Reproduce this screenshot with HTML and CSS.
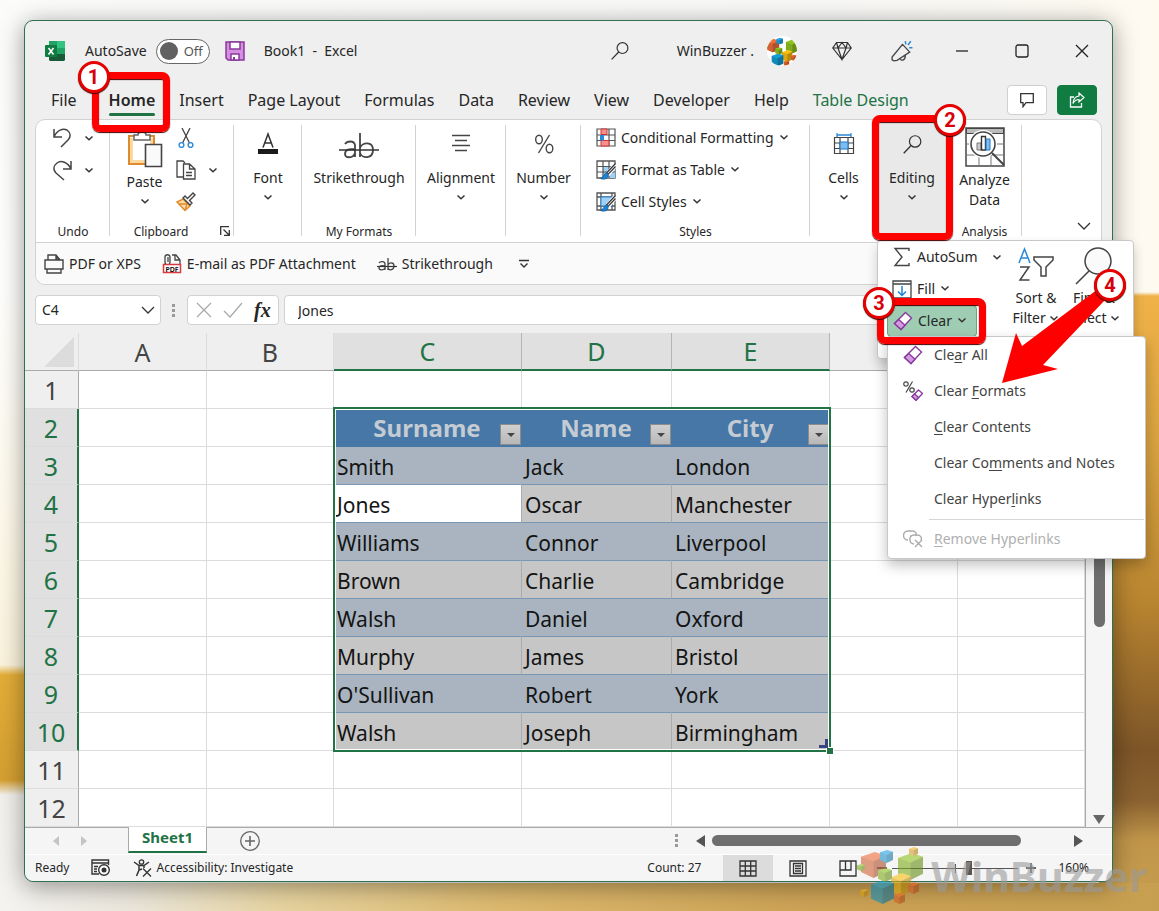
FILE: index.html
```html
<!DOCTYPE html>
<html lang="en">
<head>
    <meta charset="UTF-8">
    <meta name="viewport" content="width=device-width, initial-scale=1.0">
    <title>Book1 - Excel</title>
    <link rel="stylesheet" href="styles.css">
</head>
<body>
    <svg class="defs" width="0" height="0" aria-hidden="true">
        <symbol id="chev" viewBox="0 0 10 10"><path d="M1.500 3.500 5 6.700 8.500 3.500" fill="none" stroke="#333" stroke-width="1.500"/></symbol>
        <symbol id="chev-lg" viewBox="0 0 14 10"><path d="M1 2l6 6 6-6" fill="none" stroke="#333" stroke-width="1.300"/></symbol>
        <symbol id="lens" viewBox="0 0 24 24"><circle cx="15" cy="8.500" r="6.500" fill="none" stroke="#333" stroke-width="1.400"/><path d="M10.400 13.200 2 22" stroke="#333" stroke-width="1.500"/></symbol>
        <symbol id="cube" viewBox="0 0 20 22" preserveAspectRatio="none">
            <path d="M0 4 11 0l9 3v14l-10 5L0 17z" fill="currentColor"/>
            <path d="M0 4l10 4v14L0 17z" fill="#000" fill-opacity=".12"/>
            <path d="M10 8l10-5v14l-10 5z" fill="#000" fill-opacity=".28"/>
        </symbol>
        <symbol id="cubes" viewBox="0 0 68 58">
            <use href="#cube" x="4" y="5" width="25" height="26" color="#f0703c"/>
            <use href="#cube" x="23" y="3" width="13" height="13" color="#22a7e8"/>
            <use href="#cube" x="41" y="6" width="25" height="27" color="#8fc420"/>
            <use href="#cube" x="52" y="0" width="9" height="9" color="#f7b82a"/>
            <use href="#cube" x="0" y="17" width="8" height="7" color="#8fc420"/>
            <use href="#cube" x="34" y="26" width="20" height="23" color="#fbc011"/>
            <use href="#cube" x="14" y="33" width="23" height="24" color="#149fd6"/>
            <use href="#cube" x="21" y="21" width="14" height="14" color="#8fc420"/>
            <use href="#cube" x="3" y="42" width="8" height="8" color="#f3b318"/>
            <use href="#cube" x="51" y="35" width="11" height="12" color="#ef6a2a"/>
            <use href="#cube" x="37" y="46" width="11" height="11" color="#ef6a2a"/>
        </symbol>
        <symbol id="eraser" viewBox="0 0 20 20">
            <path d="M12.500 1.500 18.500 7 8 18.500 1.500 12.500z" fill="#fff" stroke="#8a3a9c" stroke-width="1.400"/>
            <path d="M5.800 8.500 12 14.200 8 18.500 1.500 12.500z" fill="#d59be0" stroke="#8a3a9c" stroke-width="1.400"/>
        </symbol>
        <symbol id="brush" viewBox="0 0 20 20">
            <path d="M19.500 4.500 11.500 14.500" stroke="#fff" stroke-width="5"/>
            <path d="M19.500 3.500 10.500 13l1.500 1.500 7.500-8" fill="#fff" stroke="#333" stroke-width="1.200"/>
            <path d="M10.500 13c-3 .500-2 4-6 5.500 4 1.500 8 0 7.500-4z" fill="#1f84d6" stroke="#1467a8"/>
        </symbol>
        <symbol id="strike" viewBox="0 0 40 28">
            <path d="M6 12c2-3 9-4 10 1v12M16 17c-5 0-10 0-10 5 0 4 8 5 10-1M21 1v24M21 16c2-6 13-7 13 2s-11 9-13 3" fill="none" stroke="#444" stroke-width="1.800"/>
            <path d="M0 18h40" stroke="#333" stroke-width="1.500"/>
        </symbol>
    </svg>

    <div class="desktop">
    <div class="window">

        <header class="titlebar">
            <svg class="app-icon" width="20" height="20" viewBox="0 0 20 20">
                <path d="M5 0h14l1 1v18l-1 1H5l-1-1V1z" fill="#185c37"/>
                <path d="M4 0h8v7H4z" fill="#21a366"/><path d="M12 0h8v7h-8z" fill="#33c481"/>
                <path d="M4 7h8v6H4z" fill="#107c41"/><path d="M12 7h8v6h-8z" fill="#21a366"/>
                <rect y="4" width="12" height="12" rx="1" fill="#107c41"/>
                <path d="M3.500 7 8.500 13.500M8.500 7l-5 6.500" stroke="#fff" stroke-width="1.600"/>
            </svg>
            <label class="autosave">AutoSave
                <span class="switch"><input type="checkbox"><span class="knob"></span>Off</span>
            </label>
            <button class="icon-btn save" aria-label="Save">
                <svg width="20" height="20" viewBox="0 0 20 20"><path d="M1 1h18v18H3l-2-2z" fill="#d48fe0" stroke="#8a3a9c" stroke-width="1.500"/><path d="M5 1h10v7H5zM6 19v-6h8v6z" fill="#fff" stroke="#8a3a9c" stroke-width="1.500"/><path d="M8 16h2v3H8z" fill="#8a3a9c"/></svg>
            </button>
            <span class="doc-title">Book1 &nbsp;- &nbsp;Excel</span>
            <button class="icon-btn search" aria-label="Search"><svg width="20" height="20"><use href="#lens"/></svg></button>
            <span class="user">WinBuzzer .</span>
            <span class="avatar"><svg width="36" height="31"><use href="#cubes"/></svg></span>
            <button class="cap-btn" aria-label="Premium"><svg width="20" height="20" viewBox="0 0 20 20"><path d="M4.500 1.500h11L19.200 7 10 18.500.8 7zM.8 7h18.400M10 18.500 6 7l4-5.500L14 7zM4.500 1.500 6 7M15.500 1.500 14 7" fill="none" stroke="#333" stroke-width="1.200"/></svg></button>
            <button class="cap-btn" aria-label="What's new"><svg width="22" height="22" viewBox="0 0 20 20"><path d="M10.500 4 1 15.500v2.500l1.500 1 3-.5 11.500-7.500zM8 16.500c1 3 5 2.500 5-2.500" fill="none" stroke="#444" stroke-width="1.200"/><path d="M13 1l.5 3M18 1l-2.500 3.500M16.500 7h3" stroke="#2b88d8" stroke-width="1.400"/></svg></button>
            <button class="cap-btn" aria-label="Minimize"><svg width="14" height="14"><path d="M1 7h12" stroke="#222" stroke-width="1.300"/></svg></button>
            <button class="cap-btn" aria-label="Maximize"><svg width="14" height="14"><rect x="1" y="1" width="12" height="12" rx="2" fill="none" stroke="#222" stroke-width="1.300"/></svg></button>
            <button class="cap-btn" aria-label="Close"><svg width="14" height="14"><path d="M1 1l12 12M13 1 1 13" stroke="#222" stroke-width="1.300"/></svg></button>
        </header>

        <nav class="tabs">
            <a class="tab tab-file" href="#">File</a>
            <a class="tab active" href="#">Home<span class="ring ring-home"><span class="step">1</span></span></a>
            <a class="tab" href="#">Insert</a>
            <a class="tab" href="#">Page Layout</a>
            <a class="tab" href="#">Formulas</a>
            <a class="tab" href="#">Data</a>
            <a class="tab" href="#">Review</a>
            <a class="tab" href="#">View</a>
            <a class="tab" href="#">Developer</a>
            <a class="tab" href="#">Help</a>
            <a class="tab context" href="#">Table Design</a>
            <button class="tab-btn comment" aria-label="Comments"><svg width="14" height="15" viewBox="0 0 14 15"><path d="M.700.700h12.600v9H6l-3 4v-4H.700z" fill="none" stroke="#333" stroke-width="1.300"/></svg></button>
            <button class="tab-btn share" aria-label="Share"><svg width="16" height="16" viewBox="0 0 16 16"><path d="M5 5H1.500v10h11v-4" fill="none" stroke="#fff" stroke-width="1.300"/><path d="M10 1l5 4.500L10 10V7.500c-3 0-4.500 1-6 4 .2-4 2-7 6-7.500z" fill="none" stroke="#fff" stroke-width="1.200"/></svg></button>
        </nav>

        <section class="ribbon">
            <div class="groups">
                <div class="group">
                    <div class="undo-grid">
                        <button class="icon-btn" aria-label="Undo"><svg width="22" height="22" viewBox="0 0 22 22"><path d="M2 2v8h8M2 10c3-7 9-9 13-7 4 3 4 7 1 10l-7 7" fill="none" stroke="#444" stroke-width="1.500"/></svg></button>
                        <svg width="10" height="10"><use href="#chev"/></svg>
                        <button class="icon-btn" aria-label="Redo"><svg width="22" height="22" viewBox="0 0 22 22"><path d="M19 2v8h-8M19 10C16 3 9 1 5 4 1 7 1 11 4 14l8 7" fill="none" stroke="#444" stroke-width="1.500"/></svg></button>
                        <svg width="10" height="10"><use href="#chev"/></svg>
                    </div>
                    <span class="group-label">Undo</span>
                </div>

                <div class="group">
                    <div class="clip-row">
                        <button class="big-btn tall">
                            <svg width="36" height="38" viewBox="0 0 36 38">
                                <path d="M2 6h25v28H2z" fill="#fff" stroke="#e08a2e" stroke-width="2"/>
                                <path d="M4.500 8v23.500H18M24.500 8v6" fill="none" stroke="#fbd9a0" stroke-width="3"/>
                                <path d="M7 10V5h4c0-4 8-4 8 0h4v5z" fill="#fff" stroke="#666" stroke-width="1.500"/>
                                <path d="M18.500 14.500h16v22h-16z" fill="#fafafa" stroke="#444" stroke-width="1.600"/>
                            </svg>
                            <span>Paste</span>
                            <svg width="10" height="10"><use href="#chev"/></svg>
                        </button>
                        <div class="clip-tools">
                            <button class="icon-btn wide" aria-label="Cut"><svg width="20" height="20" viewBox="0 0 20 20"><path d="M6 0l7.500 15M14 0 6.500 15" stroke="#444" stroke-width="1.300"/><circle cx="5.500" cy="17" r="2.400" fill="#fff" stroke="#2b88d8" stroke-width="1.400"/><circle cx="14.500" cy="17" r="2.400" fill="#fff" stroke="#2b88d8" stroke-width="1.400"/></svg></button>
                            <button class="icon-btn" aria-label="Copy"><svg width="20" height="20" viewBox="0 0 20 20"><path d="M7 17H1V1h6l2 2" fill="none" stroke="#444" stroke-width="1.300"/><path d="M7.500 4h6l5.500 5v10H7.500zM13.500 4v5H19M10 12.500h6M10 15.500h6" fill="#fff" stroke="#444" stroke-width="1.300"/></svg></button>
                            <svg width="10" height="10"><use href="#chev"/></svg>
                            <button class="icon-btn wide" aria-label="Format Painter"><svg width="20" height="20" viewBox="0 0 20 20"><path d="M1 10l6-3 7 7-5 4.500z" fill="#fbd9a0" stroke="#e08a2e" stroke-width="1.400"/><path d="M3 12l8 0-2 6" fill="none" stroke="#e08a2e" stroke-width="1.400"/><path d="M7 6l2-2 2.500 2.500L17 1l2 2-5.500 5.500L16 11l-2 2z" fill="#fff" stroke="#444" stroke-width="1.400"/></svg></button>
                        </div>
                    </div>
                    <span class="group-label clip-label">Clipboard</span>
                    <button class="launcher" aria-label="Clipboard options"><svg width="10" height="10"><path d="M9 .700H.700V9M3.500 3.500l5 5M9.300 4v5.300H4" fill="none" stroke="#333" stroke-width="1.300"/></svg></button>
                </div>

                <div class="group">
                    <button class="big-btn">
                        <svg width="24" height="24" viewBox="0 0 24 24"><path d="M7 15.500 12 2l5 13.500M8.800 11h6.400" fill="none" stroke="#333" stroke-width="1.500"/><path d="M2 17h20v5H2z" fill="#1a1a1a"/></svg>
                        <span>Font</span>
                        <svg width="10" height="10"><use href="#chev"/></svg>
                    </button>
                </div>

                <div class="group">
                    <button class="big-btn">
                        <svg class="mid" width="40" height="28"><use href="#strike"/></svg>
                        <span>Strikethrough</span>
                    </button>
                    <span class="group-label">My Formats</span>
                </div>

                <div class="group">
                    <button class="big-btn">
                        <svg width="24" height="24" viewBox="0 0 24 24"><path d="M3 3.500h18M6 8.500h12M3 13.500h18M6 18.500h12" stroke="#444" stroke-width="1.300"/></svg>
                        <span>Alignment</span>
                        <svg width="10" height="10"><use href="#chev"/></svg>
                    </button>
                </div>

                <div class="group">
                    <button class="big-btn">
                        <svg width="24" height="24" viewBox="0 0 24 24"><path d="M17.500 3 6.500 21" stroke="#444" stroke-width="1.400"/><ellipse cx="7" cy="7.500" rx="3.300" ry="4.200" fill="none" stroke="#444" stroke-width="1.400"/><ellipse cx="17.500" cy="16.500" rx="3.300" ry="4.200" fill="none" stroke="#444" stroke-width="1.400"/></svg>
                        <span>Number</span>
                        <svg width="10" height="10"><use href="#chev"/></svg>
                    </button>
                </div>

                <div class="group">
                    <div class="style-list">
                        <button class="row-btn">
                            <svg width="20" height="20" viewBox="0 0 20 20"><path d="M1 1h18v17H1zM1 7h18M1 12.500h18M7 1v17M13 1v17" fill="#fff" stroke="#555" stroke-width="1.200"/><path d="M5 1h6v5.500H5zM5 12.500h8V18H5z" fill="#f7918c" stroke="#d13438"/><path d="M4 7h4v5.500H4z" fill="#2b88d8"/></svg>
                            Conditional Formatting <svg width="10" height="10"><use href="#chev"/></svg>
                        </button>
                        <button class="row-btn">
                            <svg width="20" height="20" viewBox="0 0 20 20"><path d="M1 1h18v17H1z" fill="#fff" stroke="#555" stroke-width="1.300"/><path d="M7 7h12v11H7z" fill="#9fd0f5"/><path d="M1 6.500h18M1 12h18M7 1v17M13 1v17" stroke="#555" stroke-width="1.200"/><use href="#brush" width="20" height="20"/></svg>
                            Format as Table <svg width="10" height="10"><use href="#chev"/></svg>
                        </button>
                        <button class="row-btn">
                            <svg width="20" height="20" viewBox="0 0 20 20"><path d="M1 1h18v17H1zM1 5h18M5 1v17M16 1v17M1 14h18" fill="#fff" stroke="#555" stroke-width="1.300"/><path d="M5 5h11v9H5z" fill="#9fd0f5" stroke="#2b88d8"/><use href="#brush" width="20" height="20"/></svg>
                            Cell Styles <svg width="10" height="10"><use href="#chev"/></svg>
                        </button>
                    </div>
                    <span class="group-label">Styles</span>
                </div>

                <div class="group no-line">
                    <button class="big-btn">
                        <svg width="24" height="24" viewBox="0 0 24 24"><path d="M2.500 5.500h19v16h-19zM2.500 11h19M2.500 16.500h19M8 5.500v16M16 5.500v16" fill="#fff" stroke="#444" stroke-width="1.200"/><path d="M8 10h8v7H8z" fill="#7fbcf0" stroke="#1f78c8"/><path d="M5 3h14M5 1v4M19 1v4" stroke="#2b88d8" stroke-width="1.300"/></svg>
                        <span>Cells</span>
                        <svg width="10" height="10"><use href="#chev"/></svg>
                    </button>
                </div>

                <div class="group no-line editing">
                    <button class="big-btn">
                        <svg width="24" height="24" viewBox="0 0 24 24"><use href="#lens" x="2" y="2" width="21" height="21"/></svg>
                        <span>Editing</span>
                        <svg width="10" height="10"><use href="#chev"/></svg>
                    </button>

                    <div class="popup">
                        <div class="popup-left">
                            <button class="row-btn"><svg width="20" height="20" viewBox="0 0 20 20"><path d="M17 4V1.500H3l7 8.500-7 8.500h14V16" fill="none" stroke="#444" stroke-width="1.400"/></svg>AutoSum <svg class="far" width="10" height="10"><use href="#chev"/></svg></button>
                            <button class="row-btn"><svg width="20" height="20" viewBox="0 0 20 20"><path d="M1 2h18v17H1zM1 5h18" fill="#fff" stroke="#444" stroke-width="1.300"/><path d="M10 7v9M6 12.500l4 4 4-4" fill="none" stroke="#1f84d6" stroke-width="1.500"/></svg>Fill <svg width="10" height="10"><use href="#chev"/></svg></button>
                            <button class="row-btn clear"><svg width="20" height="20"><use href="#eraser"/></svg>Clear <svg width="10" height="10"><use href="#chev"/></svg></button>
                        </div>
                        <button class="popup-btn">
                            <svg width="40" height="40" viewBox="0 0 40 40"><path d="M3 16 8.500 2 14 16M5 11h7" fill="none" stroke="#2b88d8" stroke-width="1.500"/><path d="M4 20h9L4 33h9.500" fill="none" stroke="#444" stroke-width="1.500"/><path d="M18 10h19v3l-7 7v9h-5v-9l-7-7z" fill="none" stroke="#444" stroke-width="1.500"/></svg>
                            Sort &amp;<br>Filter <svg width="10" height="10"><use href="#chev"/></svg>
                        </button>
                        <button class="popup-btn">
                            <svg width="40" height="40" viewBox="0 0 40 40"><circle cx="24" cy="14" r="13" fill="#fafafa" stroke="#444" stroke-width="1.500"/><path d="M15 24 2 37" stroke="#444" stroke-width="1.600"/></svg>
                            Find &amp;<br>Select <svg width="10" height="10"><use href="#chev"/></svg>
                        </button>

                        <div class="menu">
                            <button class="menu-item"><svg width="20" height="20"><use href="#eraser"/></svg><span>Cle<u>a</u>r All</span></button>
                            <button class="menu-item"><svg width="20" height="20" viewBox="0 0 20 20"><circle cx="3" cy="3" r="2.200" fill="none" stroke="#444" stroke-width="1.200"/><circle cx="9" cy="9" r="2.200" fill="none" stroke="#444" stroke-width="1.200"/><path d="M9.500.500 3 11.500" stroke="#444" stroke-width="1.200"/><path d="M15.500 9 19.500 12.500 13 19.300 9 15.500z" fill="#fff" stroke="#8a3a9c" stroke-width="1.300"/><path d="M11.500 12.800 15.500 16.500 13 19.300 9 15.500z" fill="#d59be0" stroke="#8a3a9c" stroke-width="1.300"/></svg><span>Clear <u>F</u>ormats</span></button>
                            <button class="menu-item"><i></i><span><u>C</u>lear Contents</span></button>
                            <button class="menu-item"><i></i><span>Clear Co<u>m</u>ments and Notes</span></button>
                            <button class="menu-item"><i></i><span>Clear Hyper<u>l</u>inks</span></button>
                            <hr>
                            <button class="menu-item" disabled><svg width="20" height="20" viewBox="0 0 20 20"><path d="M5 11C-1 11-1 2 5 2h4c4 0 5 3 4 5M11 15c-5 0-6-9 0-9h3c4 0 5 3 4 5M7 7h2" fill="none" stroke="#aaa" stroke-width="1.400"/><path d="M12 11l7 7M19 11l-7 7" stroke="#aaa" stroke-width="1.400"/></svg><span><u>R</u>emove Hyperlinks</span></button>
                        </div>

                        <span class="ring ring-clear"><span class="step">3</span></span>
                        <svg class="arrow" width="120" height="100" viewBox="0 0 120 100"><path d="M5 98 19 48l6 13L101 4l7 11-62 65 15 4z" fill="#f00"/></svg>
                        <span class="step step-four">4</span>
                    </div>
                    <span class="ring ring-editing"><span class="step">2</span></span>
                </div>

                <div class="group">
                    <button class="big-btn analyze">
                        <svg width="40" height="40" viewBox="0 0 40 40"><path d="M1 1h38v38H1z" fill="#fff" stroke="#444" stroke-width="1.500"/><path d="M1.500 1.500h37v5h-37z" fill="#bbb" stroke="#444"/><path d="M1 17h38M1 28h38M14 28v11M26 28v11" stroke="#777"/><circle cx="18" cy="17" r="14" fill="#fff"/><circle cx="18" cy="17" r="12" fill="#fff" stroke="#444" stroke-width="1.600"/><path d="M12 16h4v7h-4z" fill="#ccc" stroke="#777"/><path d="M16.500 9.500h4V23h-4z" fill="#fff" stroke="#333" stroke-width="1.400"/><path d="M21 12h4v11h-4z" fill="#7fbcf0" stroke="#1f78c8"/><path d="M27 26l12 12" stroke="#444" stroke-width="2"/></svg>
                        <span>Analyze<br>Data</span>
                    </button>
                    <span class="group-label">Analysis</span>
                </div>

                <div class="group no-line collapse">
                    <button class="icon-btn" aria-label="Collapse ribbon"><svg width="14" height="10"><use href="#chev-lg"/></svg></button>
                </div>
            </div>

            <div class="quickbar">
                <button class="row-btn"><svg width="20" height="20" viewBox="0 0 20 20"><path d="M4 6V1h8l4 5M12 1v4h4M1 6h18v9H1zM3 15v4h14v-4" fill="none" stroke="#444" stroke-width="1.400"/></svg>PDF or XPS</button>
                <button class="row-btn"><svg width="20" height="20" viewBox="0 0 20 20"><path d="M3 3v5c0 4 5 4 5 0V3c0-3-5-3-5 0M6 3v5M10 1h4l4 5v4M13 1v5h5" fill="none" stroke="#444" stroke-width="1.300"/><path d="M1.500 10.500h17v8h-17z" fill="#fff" stroke="#d9393e" stroke-width="1.500"/><text x="10" y="17.500" class="pdf">PDF</text></svg>E-mail as PDF Attachment</button>
                <button class="row-btn"><svg width="20" height="20" viewBox="0 0 20 20"><path d="M2 9c1-2 6-2 6 1v6M8 12c-3-1-6 0-6 2s4 3 6 0M11 4v12M11 11c1-3 6-3 6 1s-5 5-6 2" fill="none" stroke="#444" stroke-width="1.300"/><path d="M0 12.500h20" stroke="#333" stroke-width="1.200"/></svg>Strikethrough</button>
                <button class="icon-btn" aria-label="Customize toolbar"><svg width="10" height="10"><path d="M0 1.500h10M1.500 4.500 5 8l3.500-3.500" fill="none" stroke="#333" stroke-width="1.400"/></svg></button>
            </div>
        </section>

        <div class="formula-bar">
            <select class="name-box" aria-label="Name box"><option>C4</option></select>
            <span class="dots"><i></i><i></i><i></i></span>
            <div class="fx-box">
                <button class="icon-btn" aria-label="Cancel"><svg width="16" height="16"><path d="M1 1l14 14M15 1 1 15" stroke="#aaa" stroke-width="1.300"/></svg></button>
                <button class="icon-btn" aria-label="Enter"><svg width="20" height="16"><path d="M1 9l6 6L19 1" fill="none" stroke="#aaa" stroke-width="1.300"/></svg></button>
                <button class="icon-btn fx" aria-label="Insert function">fx</button>
            </div>
            <input class="formula" type="text" value="Jones" aria-label="Formula">
        </div>

        <main class="sheet">
            <div class="grid-area">
                <table class="grid">
                    <colgroup><col class="c-num"><col class="c-a"><col class="c-b"><col class="c-c"><col class="c-d"><col class="c-e"><col class="c-f"><col></colgroup>
                    <thead>
                        <tr><th class="corner"></th><th>A</th><th>B</th><th class="on">C</th><th class="on">D</th><th class="on">E</th><th></th><th></th></tr>
                    </thead>
                    <tbody>
                        <tr><th>1</th><td></td><td></td><td></td><td></td><td></td><td></td><td></td></tr>
                        <tr class="head"><th class="on">2</th><td></td><td></td><td class="f">Surname<button class="filter" aria-label="Filter Surname"></button></td><td class="f">Name<button class="filter" aria-label="Filter Name"></button></td><td class="f">City<button class="filter" aria-label="Filter City"></button></td><td></td><td></td></tr>
                        <tr class="odd"><th class="on">3</th><td></td><td></td><td class="f">Smith</td><td class="f">Jack</td><td class="f">London</td><td></td><td></td></tr>
                        <tr class="even"><th class="on">4</th><td></td><td></td><td class="f current">Jones</td><td class="f">Oscar</td><td class="f">Manchester</td><td></td><td></td></tr>
                        <tr class="odd"><th class="on">5</th><td></td><td></td><td class="f">Williams</td><td class="f">Connor</td><td class="f">Liverpool</td><td></td><td></td></tr>
                        <tr class="even"><th class="on">6</th><td></td><td></td><td class="f">Brown</td><td class="f">Charlie</td><td class="f">Cambridge</td><td></td><td></td></tr>
                        <tr class="odd"><th class="on">7</th><td></td><td></td><td class="f">Walsh</td><td class="f">Daniel</td><td class="f">Oxford</td><td></td><td></td></tr>
                        <tr class="even"><th class="on">8</th><td></td><td></td><td class="f">Murphy</td><td class="f">James</td><td class="f">Bristol</td><td></td><td></td></tr>
                        <tr class="odd"><th class="on">9</th><td></td><td></td><td class="f">O'Sullivan</td><td class="f">Robert</td><td class="f">York</td><td></td><td></td></tr>
                        <tr class="even"><th class="on">10</th><td></td><td></td><td class="f">Walsh</td><td class="f">Joseph</td><td class="f">Birmingham</td><td></td><td></td></tr>
                        <tr><th>11</th><td></td><td></td><td></td><td></td><td></td><td></td><td></td></tr>
                        <tr><th>12</th><td></td><td></td><td></td><td></td><td></td><td></td><td></td></tr>
                    </tbody>
                </table>
                <div class="selection"><span class="handle"></span></div>
            </div>
            <div class="vscroll">
                <span class="thumb"></span>
                <svg width="12" height="10"><path d="M0 1h12L6 10z" fill="#666"/></svg>
            </div>
        </main>

        <div class="sheet-tabs">
            <button class="icon-btn" aria-label="Previous sheet"><svg width="6" height="10"><path d="M6 0v10L0 5z" fill="#c4c4c4"/></svg></button>
            <button class="icon-btn" aria-label="Next sheet"><svg width="6" height="10"><path d="M0 0v10l6-5z" fill="#c4c4c4"/></svg></button>
            <a class="sheet-tab" href="#">Sheet1</a>
            <button class="icon-btn" aria-label="New sheet"><svg width="20" height="20"><circle cx="10" cy="10" r="9.300" fill="none" stroke="#666" stroke-width="1.300"/><path d="M10 5v10M5 10h10" stroke="#666" stroke-width="1.600"/></svg></button>
            <div class="hscroll">
                <span class="dots"><i></i><i></i><i></i></span>
                <svg width="9" height="12"><path d="M9 0v12L0 6z" fill="#555"/></svg>
                <span class="track"><span class="thumb"></span></span>
                <svg width="9" height="12"><path d="M0 0v12l9-6z" fill="#555"/></svg>
            </div>
        </div>

        <footer class="status">
            <span>Ready</span>
            <svg width="20" height="18" viewBox="0 0 20 18"><path d="M17.500 6V1H1v14h7M1 4h17M3 7.500h4M3 10h3M3 12.500h3" fill="none" stroke="#333" stroke-width="1.400"/><circle cx="13" cy="11" r="5.300" fill="#fff" stroke="#333" stroke-width="1.400"/><circle cx="13" cy="11" r="2.500" fill="#333"/></svg>
            <span class="access"><svg width="20" height="18" viewBox="0 0 20 18"><circle cx="8.500" cy="3" r="2.200" fill="none" stroke="#333" stroke-width="1.300"/><path d="M1 3l5 3.500h5L16 3M6 6.500V11l-2.500 6M11 6.500V9M6 11l3-1" fill="none" stroke="#333" stroke-width="1.500"/><path d="M10 9.500l8 8M18 9.500l-8 8" stroke="#333" stroke-width="1.300"/></svg>Accessibility: Investigate</span>
            <span class="count">Count: 27</span>
            <button class="view on" aria-label="Normal view"><svg width="18" height="17"><path d="M1 1h16v15H1zM1 6h16M1 11h16M6.300 1v15M11.700 1v15" fill="none" stroke="#333" stroke-width="1.300"/></svg></button>
            <button class="view" aria-label="Page layout view"><svg width="18" height="17"><path d="M1 1h16v15H1zM4.500 3.500h9v10h-9zM6 6h6M6 8.500h6M6 11h6" fill="none" stroke="#333" stroke-width="1.300"/></svg></button>
            <button class="view" aria-label="Page break view"><svg width="18" height="17"><path d="M1 1h16v15H1zM1 10h11V1M6.500 1v9" fill="none" stroke="#333" stroke-width="1.300"/></svg></button>
            <button class="icon-btn" aria-label="Zoom out"><svg width="10" height="10"><path d="M0 5h10" stroke="#333" stroke-width="1.300"/></svg></button>
            <input class="zoom" type="range" min="0" max="100" value="61" aria-label="Zoom">
            <button class="icon-btn" aria-label="Zoom in"><svg width="10" height="10"><path d="M0 5h10M5 0v10" stroke="#333" stroke-width="1.300"/></svg></button>
            <span class="percent">160%</span>
        </footer>
    </div>

    <div class="watermark"><svg width="68" height="58"><use href="#cubes"/></svg><span>WinBuzzer</span></div>
    </div>
</body>
</html>
```
FILE: styles.css
```css
* {
    box-sizing: border-box;
}
body {
    margin: 0;
    font-family: "Noto Sans", "Open Sans", sans-serif;
    font-size: 14px;
    line-height: 20px;
    color: #262626;
}
button, input, select {
    font: inherit;
    color: inherit;
    margin: 0;
    padding: 0;
    border: none;
    background: none;
}
a {
    color: inherit;
    text-decoration: none;
}
svg {
    display: block;
    flex: none;
}
.defs {
    position: absolute;
}
.desktop {
    position: relative;
    min-height: 100vh;
    padding: 20px 46px 28px 24px;
    background:
        linear-gradient(90deg, #f4f3f1 0, #ebe7dc 130px, #e6d3a0 280px, #dcb96e 500px, #cda356 800px, #c79f50) bottom / 100% 28px no-repeat,
        linear-gradient(180deg, #fbfbfa 0, #fefefd 280px, #fdf9ec 500px, #fbf3dc 665px, #e3ae38 675px, #d59f31 780px, #f2f0ec 795px, #f4f3f1) left / 60px 100% no-repeat,
        linear-gradient(180deg, transparent 292px, #efb248 296px, #d9a341 440px, #b98530 600px, #7d5528 750px, #8a6130 800px, #c0954a 840px, #c79f50) right / 60px 100% no-repeat,
        linear-gradient(90deg, #fbfbfa, #f8f8f7 70%, #fefaf0);
}
.window {
    position: relative;
    background: #efefef;
    border: 1px solid #2f7050;
    border-radius: 9px;
    box-shadow: 0 4px 24px rgba(0, 0, 0, 0.4);
}

/* title bar */
.titlebar {
    display: flex;
    align-items: center;
    height: 60px;
    padding-left: 20px;
}
.autosave {
    display: flex;
    align-items: center;
    gap: 9px;
    margin: 0 15px 0 20px;
}
.switch {
    position: relative;
    display: flex;
    align-items: center;
    gap: 6px;
    width: 54px;
    height: 25px;
    padding-left: 3px;
    font-size: 13px;
    color: #555;
    background: #fff;
    border: 1px solid #666;
    border-radius: 13px;
}
.switch input {
    position: absolute;
    inset: 0;
    opacity: 0;
}
.knob {
    width: 18px;
    height: 18px;
    border-radius: 50%;
    background: #616161;
}
.save {
    margin-right: 19px;
}
.search {
    margin: 0 47px 0 auto;
}
.avatar {
    display: flex;
    align-items: center;
    justify-content: center;
    width: 30px;
    height: 30px;
    margin: 0 15px 0 13px;
    overflow: hidden;
    background: #fff;
    border-radius: 50%;
}
.icon-btn, .cap-btn {
    display: flex;
    align-items: center;
    justify-content: center;
}
.cap-btn {
    width: 60px;
    height: 40px;
}

/* ribbon tabs */
.tabs {
    display: flex;
    align-items: center;
    gap: 24px;
    height: 38px;
    padding: 0 15px 0 26px;
    font-size: 16px;
}
.tab {
    position: relative;
    line-height: 32px;
    white-space: nowrap;
}
.tab-file {
    margin-right: 8px;
}
.active {
    font-weight: 600;
}
.active::after {
    content: "";
    position: absolute;
    left: 0;
    right: 0;
    bottom: 0;
    height: 3px;
    border-radius: 2px;
    background: #217346;
}
.context {
    color: #217346;
}
.tab-btn {
    display: flex;
    align-items: center;
    justify-content: center;
    width: 40px;
    height: 30px;
    border: 1px solid #d0d0d0;
    border-radius: 4px;
    background: #fff;
}
.comment {
    margin: 0 -14px 0 auto;
}
.share {
    border-color: #107c41;
    background: #107c41;
}

/* ribbon */
.ribbon {
    margin: 0 10px;
    border: 1px solid #d2d2d2;
    border-radius: 10px;
    background: #fff;
}
.groups {
    display: grid;
    grid-template-columns: 74px 124px 68px 114px 90px 75px 229px 67px 70px 75px 1fr;
    height: 123px;
    border-bottom: 1px solid #d2d2d2;
}
.group {
    position: relative;
    display: flex;
    flex-direction: column;
    align-items: center;
    justify-content: space-between;
}
.group::after {
    content: "";
    position: absolute;
    top: 5px;
    bottom: 6px;
    right: 0;
    width: 1px;
    background: #d2d2d2;
}
.no-line::after {
    display: none;
}
.group-label {
    font-size: 12px;
}
.clip-label {
    margin-right: 22px;
}
.big-btn {
    display: flex;
    flex-direction: column;
    align-items: center;
    width: 100%;
    padding-top: 12px;
}
.big-btn span {
    margin: 12px 0 4px;
}
.big-btn .mid + span {
    margin-top: 8px;
}
.tall {
    width: auto;
    padding-top: 10px;
}
.tall span {
    margin: 4px 0;
}
.analyze {
    padding-top: 7px;
}
.analyze span {
    margin: 3px 0 0;
}
.undo-grid {
    display: grid;
    grid-template-columns: 22px 10px;
    align-items: center;
    gap: 10px;
    padding-top: 7px;
}
.clip-row {
    display: flex;
    gap: 13px;
}
.clip-tools {
    display: grid;
    grid-template-columns: 20px 10px;
    align-content: start;
    align-items: center;
    gap: 12px;
    padding-top: 8px;
}
.wide {
    grid-column: 1 / -1;
    justify-content: flex-start;
}
.launcher {
    position: absolute;
    right: 4px;
    bottom: 6px;
}
.style-list {
    display: flex;
    flex-direction: column;
    width: 100%;
    padding: 2px 0 0 15px;
}
.row-btn {
    display: flex;
    align-items: center;
    gap: 5px;
    height: 32px;
    white-space: nowrap;
}
.row-btn svg + svg {
    margin-bottom: 3px;
}
.editing .big-btn {
    height: 118px;
    margin-top: 1px;
    padding-top: 11px;
    justify-content: flex-start;
    background: #e9e9e9;
}
.editing {
    z-index: 5;
}
.collapse {
    align-items: flex-end;
    justify-content: flex-end;
    padding: 0 10px 11px 0;
}
.quickbar {
    display: flex;
    align-items: center;
    gap: 21px;
    height: 41px;
    padding: 0 0 0 8px;
    background: #fafafa;
    border-radius: 0 0 10px 10px;
}
.quickbar .icon-btn {
    margin-left: 5px;
}
.pdf {
    font-size: 7px;
    font-weight: 600;
    text-anchor: middle;
}

/* Editing flyout and Clear menu */
.popup {
    position: absolute;
    top: 120px;
    left: 0;
    display: flex;
    width: 257px;
    height: 119px;
    border: 1px solid #c8c8c8;
    border-radius: 4px;
    background: #fff;
    box-shadow: 0 6px 12px rgba(0, 0, 0, 0.18);
}
.popup-left {
    width: 129px;
    padding-left: 9px;
}
.popup-left .row-btn {
    width: 100%;
    padding-left: 5px;
}
.popup-left .row-btn .far {
    margin: 0 0 0 9px;
}
.popup-left .clear {
    width: 90px;
    border: 1px solid #6f9f85;
    border-radius: 4px;
    background: #9fcdb3;
}
.popup-btn {
    width: 58px;
    padding-top: 6px;
    align-self: flex-start;
    white-space: nowrap;
}
.popup-btn > svg:first-child {
    margin: 0 auto 1px;
}
.popup-btn svg:last-child {
    display: inline;
}
.menu {
    position: absolute;
    top: 95px;
    left: 9px;
    width: 259px;
    padding-bottom: 1px;
    border: 1px solid #c8c8c8;
    border-radius: 4px;
    background: #fff;
    box-shadow: 0 6px 14px rgba(0, 0, 0, 0.25);
}
.menu-item {
    display: flex;
    align-items: center;
    gap: 11px;
    width: 100%;
    height: 36px;
    padding-left: 15px;
    color: #444;
    text-align: left;
}
.menu-item i {
    width: 20px;
}
.menu-item:disabled {
    color: #b0b0b0;
}
.menu-item u {
    text-underline-offset: 2px;
}
.menu hr {
    margin: 2px 1px 1px 41px;
    border: none;
    border-top: 1px solid #d6d6d6;
}

/* numbered steps */
.ring {
    position: absolute;
    border: 7px solid #f00;
    border-radius: 8px;
    box-shadow: 0 1px 1px #400, inset 0 1px 1px #400;
    pointer-events: none;
}
.ring-home {
    inset: -12px -15px -16px -17px;
    z-index: 3;
}
.ring-editing {
    inset: -5px -6px 2px -5px;
}
.ring-clear {
    top: 57px;
    left: -1px;
    width: 109px;
    height: 46px;
}
.step {
    position: absolute;
    top: -18px;
    left: -21px;
    width: 32px;
    height: 32px;
    border: 3px solid #e60000;
    border-radius: 50%;
    background: #fff;
    box-shadow: 0 1px 1px #400;
    color: #d8000c;
    font: bold 20px/26px Roboto, sans-serif;
    text-align: center;
}
.ring-editing .step {
    left: auto;
    right: -20px;
}
.step-four {
    top: 28px;
    left: 216px;
}
.arrow {
    position: absolute;
    top: 44px;
    left: 119px;
}

/* formula bar */
.formula-bar {
    display: flex;
    align-items: center;
    padding: 10px 10px 8px;
}
.name-box, .fx-box, .formula {
    height: 30px;
    border: 1px solid #d2d2d2;
    border-radius: 4px;
    background: #fff;
}
.name-box {
    width: 126px;
    padding-left: 6px;
    appearance: none;
    background: #fff url("data:image/svg+xml,%3Csvg xmlns='http://www.w3.org/2000/svg' width='14' height='8'%3E%3Cpath d='M1 1l6 6 6-6' fill='none' stroke='%23333' stroke-width='1.300'/%3E%3C/svg%3E") right 5px center no-repeat;
}
.dots {
    display: flex;
    flex-direction: column;
    gap: 2px;
}
.dots i {
    width: 3px;
    height: 3px;
    background: #999;
}
.formula-bar .dots {
    margin: 0 12px 0 11px;
}
.fx-box {
    display: flex;
    align-items: center;
    gap: 11px;
    width: 92px;
    padding: 0 8px;
}
.fx {
    font: italic bold 20px/24px "Liberation Serif", serif;
}
.formula {
    flex: 1;
    min-width: 0;
    margin-left: 5px;
    padding-left: 13px;
}

/* worksheet */
.sheet {
    display: flex;
}
.grid-area {
    position: relative;
    flex: 1;
    min-width: 0;
    border-right: 1px solid #aaa;
}
.grid {
    width: 100%;
    table-layout: fixed;
    border-collapse: separate;
    border-spacing: 0;
    background: #fff;
}
.c-num { width: 54px; }
.c-a { width: 128px; }
.c-b { width: 127px; }
.c-c { width: 188px; }
.c-d { width: 150px; }
.c-e { width: 158px; }
.c-f { width: 128px; }
.grid th, .grid td {
    position: relative;
    height: 38px;
    padding: 0 0 0 3px;
    border-right: 1px solid #dcdcdc;
    border-bottom: 1px solid #dcdcdc;
    line-height: 28px;
    white-space: nowrap;
}
.grid th {
    padding: 0;
    background: #efefef;
    color: #444;
    font-size: 25px;
    font-weight: 400;
}
.grid thead th {
    border-bottom-color: #aaa;
}
.grid tbody th {
    border-right-color: #aaa;
}
.grid th.on {
    background: #e0e0e0;
    color: #217346;
}
.grid thead th.on {
    border-right-color: #b4b4b4;
    border-bottom: 2px solid #217346;
}
.grid tbody th.on {
    border-right: 2px solid #217346;
}
.corner::after {
    content: "";
    position: absolute;
    right: 4px;
    bottom: 3px;
    border-left: 30px solid transparent;
    border-bottom: 30px solid #dcdcdc;
}
.grid .f {
    padding-top: 2px;
    color: #141414;
    font-size: 21px;
}
.grid .head .f {
    padding: 0 4px 0 3px;
    border-color: #4677a6;
    background: #4677a6;
    color: #c5cbd3;
    font-size: 24px;
    font-weight: 700;
    text-align: center;
}
.odd .f {
    border-right-color: #a9b4c0;
    border-bottom-color: #7897b5;
    background: #a9b4c0;
}
.even .f {
    border-right-color: #ababab;
    border-bottom-color: #7897b5;
    background: #c6c6c6;
}
.even .current {
    background: #fff;
}
.filter {
    position: absolute;
    right: 0;
    bottom: 1px;
    width: 21px;
    height: 21px;
    border: 1px solid #8c8c8c;
    background: linear-gradient(#d0d0d0, #b8b8b8);
}
.filter::after {
    content: "";
    position: absolute;
    top: 8px;
    left: 6px;
    border: 4px solid transparent;
    border-top-color: #444;
}
.selection {
    position: absolute;
    top: 74px;
    left: 308px;
    width: 498px;
    height: 345px;
    border: 2px solid #217346;
    box-shadow: inset 0 0 0 1px #fff;
    pointer-events: none;
}
.handle {
    position: absolute;
    right: -4px;
    bottom: -4px;
    width: 6px;
    height: 6px;
    background: #217346;
    outline: 1px solid #fff;
}
.handle::before {
    content: "";
    position: absolute;
    right: 5px;
    bottom: 6px;
    width: 6px;
    height: 6px;
    border: solid #39457f;
    border-width: 0 3px 3px 0;
}
.vscroll {
    display: flex;
    flex-direction: column;
    align-items: center;
    justify-content: space-between;
    width: 26px;
    padding: 22px 0 3px;
    background: #f5f5f5;
}
.thumb {
    width: 11px;
    height: 272px;
    border-radius: 6px;
    background: #6e6e6e;
}

/* sheet tabs and status bar */
.sheet-tabs {
    display: flex;
    align-items: center;
    height: 28px;
    padding-left: 28px;
    gap: 22px;
    border-bottom: 1px solid #fff;
    background: #f5f5f5;
    box-shadow: inset 0 1px #aaa;
}
.sheet-tab {
    align-self: flex-start;
    width: 79px;
    height: 26px;
    margin: 0 11px 0 19px;
    border: 1px solid #aaa;
    border-width: 0 1px;
    border-bottom: 2px solid #217346;
    background: #fff;
    color: #217346;
    font-size: 15px;
    font-weight: 700;
    text-align: center;
}
.hscroll {
    display: flex;
    align-items: center;
    gap: 7px;
    width: 408px;
    margin-left: auto;
    margin-right: 29px;
}
.hscroll .dots {
    margin-right: 11px;
}
.track {
    display: flex;
    flex: 1;
}
.track .thumb {
    width: 87%;
    height: 11px;
}
.status {
    display: flex;
    align-items: center;
    height: 26px;
    padding: 0 23px 0 10px;
    gap: 22px;
    border-radius: 0 0 9px 9px;
    background: #f5f5f5;
    font-size: 12px;
}
.access {
    display: flex;
    align-items: center;
    gap: 3px;
}
.count {
    margin-left: auto;
}
.view {
    display: flex;
    align-items: center;
    justify-content: center;
    align-self: stretch;
    width: 50px;
    margin-right: -22px;
}
.view.on {
    background: #dcdcdc;
}
.status .icon-btn {
    margin-left: 26px;
}
.status .view + .icon-btn {
    margin-left: 4px;
}
.status .zoom + .icon-btn {
    margin-left: -14px;
}
.zoom {
    width: 126px;
    height: 16px;
    margin-left: -17px;
    appearance: none;
    background: linear-gradient(#555, #555) center / 100% 1px no-repeat, linear-gradient(#555, #555) center / 1px 9px no-repeat;
}
.zoom::-webkit-slider-thumb {
    appearance: none;
    width: 6px;
    height: 14px;
    background: #555;
}
.watermark {
    position: absolute;
    right: 12px;
    bottom: 6px;
    z-index: 6;
    display: flex;
    align-items: center;
    gap: 6px;
    opacity: 0.6;
    pointer-events: none;
}
.watermark span {
    color: #9a9a9a;
    font: bold 41px/50px "Noto Sans", sans-serif;
}
```
